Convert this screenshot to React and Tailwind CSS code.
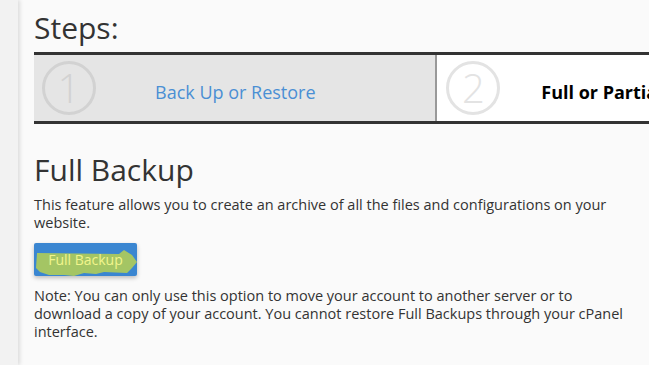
export default function App() {
  return (
    <div className="flex h-[365px] w-[649px] overflow-hidden bg-[#fafafa] font-['Open_Sans',sans-serif] text-[#333]">
      <div className="w-[18px] shrink-0 bg-[#f2f2f2] shadow-[2px_0_4px_rgba(0,0,0,0.12)]" />

      <div className="flex-1 pl-[16px]">
        <h1 className="mt-[8px] text-[30px] leading-[40px] text-[#333]">Steps:</h1>

        <div className="mt-[4px] flex h-[72px] w-[700px] border-y-[3px] border-[#333]">
          <div className="flex w-[404px] items-center border-r-2 border-[#999] bg-[#e5e5e5] pl-[8px]">
            <div className="flex h-[54px] w-[54px] items-center justify-center rounded-full border-[3px] border-[#d2d2d2] text-[40px] font-light leading-none text-[#d2d2d2]">
              1
            </div>
            <span className="ml-[59px] mt-[8px] text-[18px] text-[#4a8fd4]">Back Up or Restore</span>
          </div>
          <div className="flex flex-1 items-center bg-white pl-[9px]">
            <div className="flex h-[54px] w-[54px] items-center justify-center rounded-full border-[3px] border-[#e3e3e3] text-[40px] font-light leading-none text-[#e3e3e3]">
              2
            </div>
            <span className="ml-[41px] mt-[8px] whitespace-nowrap text-[18px] font-bold text-black">Full or Partial Backup</span>
          </div>
        </div>

        <h2 className="mt-[26px] text-[30px] leading-[40px] text-[#333]">Full Backup</h2>

        <p className="mt-[6px] w-[595px] text-[14.5px] leading-[18px] text-[#333]">
          This feature allows you to create an archive of all the files and configurations on your website.
        </p>

        <button className="relative mt-[11px] h-[33px] w-[103px] rounded-[2px] bg-[#3a86d1] text-[14px] shadow-[0_2px_4px_rgba(0,0,0,0.25)]">
          <svg className="absolute left-0 top-0" width="103" height="33" viewBox="0 0 103 33">
            <path d="M3 10 L85 11 L90 7 L98 12 L103 19 L98 25 L93 30 L70 29 L62 31 L50 30 L40 33 L30 32 L15 32 L6 29 L2 25 Z" fill="#a4c564" />
          </svg>
          <span className="relative text-[#f2f58c]">Full Backup</span>
        </button>

        <p className="mt-[11px] w-[600px] text-[14.5px] leading-[18px] text-[#333]">
          Note: You can only use this option to move your account to another server or to download a copy of your account. You cannot restore Full Backups through your cPanel interface.
        </p>
      </div>
    </div>
  )
}
